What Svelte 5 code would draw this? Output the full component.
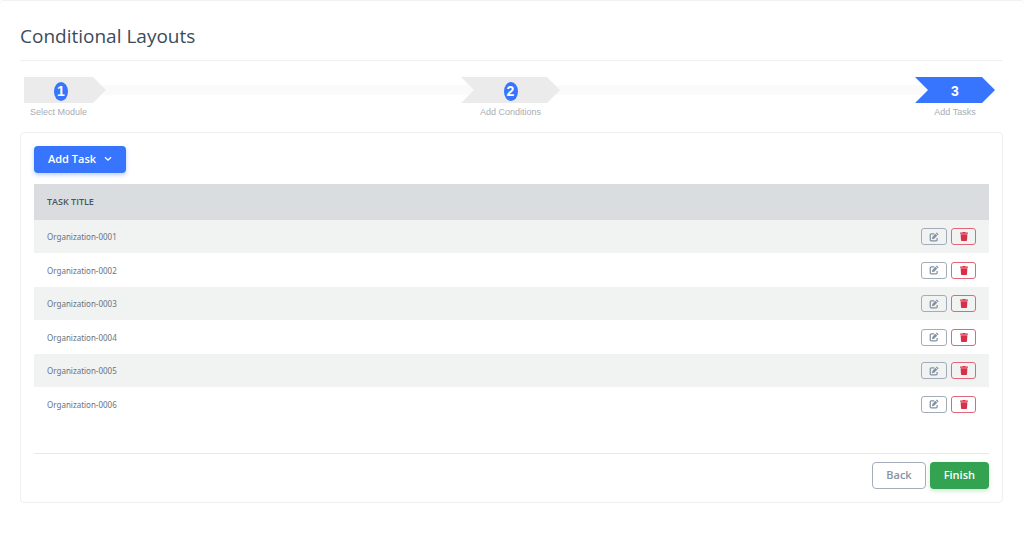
<script>
    const steps = [
        { number: 1, label: 'Select Module' },
        { number: 2, label: 'Add Conditions' },
        { number: 3, label: 'Add Tasks' }
    ];
    let current = 3;

    let tasks = [
        'Organization-0001',
        'Organization-0002',
        'Organization-0003',
        'Organization-0004',
        'Organization-0005',
        'Organization-0006'
    ];

    function removeTask(task) {
        tasks = tasks.filter((t) => t !== task);
    }
</script>

<main class="page">
    <h1>Conditional Layouts</h1>

    <ol class="steps">
        {#each steps as step}
            <li class="step" class:active={step.number === current}>
                <div class="arrow"><span class="number">{step.number}</span></div>
                <div class="label">{step.label}</div>
            </li>
        {/each}
    </ol>

    <section class="card">
        <button class="btn primary">
            Add Task
            <svg class="chevron" viewBox="0 0 8 6" aria-hidden="true">
                <path d="M1 1.2 L4 4.2 L7 1.2" />
            </svg>
        </button>

        <table>
            <thead>
                <tr>
                    <th>TASK TITLE</th>
                    <th></th>
                </tr>
            </thead>
            <tbody>
                {#each tasks as task}
                    <tr>
                        <td>{task}</td>
                        <td>
                            <div class="actions">
                                <button class="icon_button" aria-label="Edit {task}">
                                    <svg class="edit" viewBox="0 0 16 16" aria-hidden="true">
                                        <path
                                            class="sheet"
                                            d="M8.500 3H3.500A1.500 1.500 0 0 0 2 4.500v8A1.500 1.500 0 0 0 3.500 14h8a1.500 1.500 0 0 0 1.500-1.500V9.500"
                                        />
                                        <path d="M12.400 0.600l3 3-1.500 1.500-3-3zM10.200 2.800l3 3-5 5-3.400.6.500-3.600z" />
                                    </svg>
                                </button>
                                <button
                                    class="icon_button danger"
                                    aria-label="Delete {task}"
                                    on:click={() => removeTask(task)}
                                >
                                    <svg viewBox="0 0 448 512" aria-hidden="true">
                                        <path
                                            d="M432 32H312l-9.400-18.700A24 24 0 0 0 281.100 0H166.800a23.720 23.720 0 0 0-21.400 13.300L136 32H16A16 16 0 0 0 0 48v32a16 16 0 0 0 16 16h416a16 16 0 0 0 16-16V48a16 16 0 0 0-16-16zM32 128l21.200 339a48 48 0 0 0 47.900 45h245.800a48 48 0 0 0 47.900-45L416 128z"
                                        />
                                    </svg>
                                </button>
                            </div>
                        </td>
                    </tr>
                {/each}
            </tbody>
        </table>

        <footer>
            <button class="btn secondary">Back</button>
            <button class="btn success">Finish</button>
        </footer>
    </section>
</main>

<style>
    :global(body) {
        background-color: #fff;
        font-family: 'Open Sans', sans-serif;
    }

    .page {
        border-top: 1px solid #f1f1f4;
        border-radius: 4px;
        padding: 23px 21px 32px 20px;
    }

    h1 {
        color: #3c4b5a;
        font-size: 19px;
        font-weight: 400;
        line-height: 24px;
        margin: 0;
        padding-bottom: 12px;
        border-bottom: 1px solid #f1f1f1;
    }

    .steps {
        display: flex;
        justify-content: space-between;
        list-style: none;
        margin: 16px 8px 14px 4px;
        padding: 0;
        background: linear-gradient(#fafafa, #fafafa) 0 8px / 100% 10px no-repeat;
    }
    .step {
        width: 80px;
        font-family: 'Liberation Sans', sans-serif;
        text-align: center;
    }
    .step:first-child {
        width: 82px;
    }
    .step:nth-child(2) {
        width: 99px;
    }
    .arrow {
        display: flex;
        align-items: center;
        justify-content: center;
        height: 26px;
        background-color: #ebebeb;
        clip-path: polygon(0 0, calc(100% - 13px) 0, 100% 50%, calc(100% - 13px) 100%, 0 100%, 13px 50%);
    }
    .step:first-child .arrow {
        clip-path: polygon(0 0, calc(100% - 13px) 0, 100% 50%, calc(100% - 13px) 100%, 0 100%);
        padding-right: 8px;
    }
    .step:first-child .label {
        padding-right: 13px;
    }
    .number {
        width: 14px;
        margin-top: 3px;
        border-radius: 50%;
        background-color: #3875ff;
        color: #fff;
        font-size: 14px;
        font-weight: 700;
        line-height: 19px;
    }
    .label {
        color: #a8adb4;
        font-size: 9px;
        line-height: 12px;
        padding-top: 3px;
    }
    .active .arrow {
        background-color: #3875ff;
    }

    .card {
        border: 1px solid #efefef;
        border-radius: 4px;
        padding: 13px;
    }

    .btn {
        height: 27px;
        padding: 0 13px 2px;
        border: 1px solid transparent;
        border-radius: 4px;
        color: #fff;
        font-family: inherit;
        font-size: 11px;
        font-weight: 600;
        line-height: 16px;
        cursor: pointer;
    }
    .primary {
        display: flex;
        align-items: center;
        gap: 8px;
        background-color: #3875ff;
        box-shadow: 0 2px 4px rgba(56, 117, 255, 0.35);
    }
    .secondary {
        border-color: #a5adba;
        background-color: #fff;
        color: #8793a3;
    }
    .success {
        background-color: #33a351;
        box-shadow: 0 2px 4px rgba(51, 163, 81, 0.25);
    }
    .chevron {
        width: 8px;
        height: 6px;
        fill: none;
        stroke: #fff;
        stroke-width: 1.3;
    }

    table {
        width: 100%;
        margin-top: 11px;
        border-collapse: collapse;
    }
    th,
    td {
        padding: 0 13px;
        text-align: left;
    }
    th {
        height: 34px;
        padding-bottom: 2px;
        background-color: #d9dde0;
        color: #4b5560;
        font-size: 9px;
        font-weight: 600;
    }
    td {
        height: 33px;
        color: #69727c;
        font-family: 'Noto Sans', 'Open Sans', sans-serif;
        font-size: 8px;
    }
    tr:nth-child(odd) td {
        background-color: #f1f3f3;
    }
    tr:nth-child(even) td {
        height: 34px;
    }

    .actions {
        display: flex;
        justify-content: flex-end;
        gap: 4px;
    }
    .icon_button {
        display: flex;
        align-items: center;
        justify-content: center;
        width: 26px;
        height: 17px;
        padding: 0;
        border: 1px solid #a3acb9;
        border-radius: 3px;
        background: none;
        cursor: pointer;
    }
    .icon_button svg {
        width: 8px;
        height: 9px;
        fill: #d9304a;
    }
    .icon_button .edit {
        width: 10px;
        height: 10px;
        fill: #8491a1;
    }
    .edit .sheet {
        fill: none;
        stroke: #8491a1;
        stroke-width: 2;
    }
    .icon_button.danger {
        width: 25px;
        border-color: #e0677a;
    }

    footer {
        display: flex;
        justify-content: flex-end;
        gap: 4px;
        margin-top: 32px;
        padding-top: 8px;
        border-top: 1px solid #e9e9e9;
    }
</style>
